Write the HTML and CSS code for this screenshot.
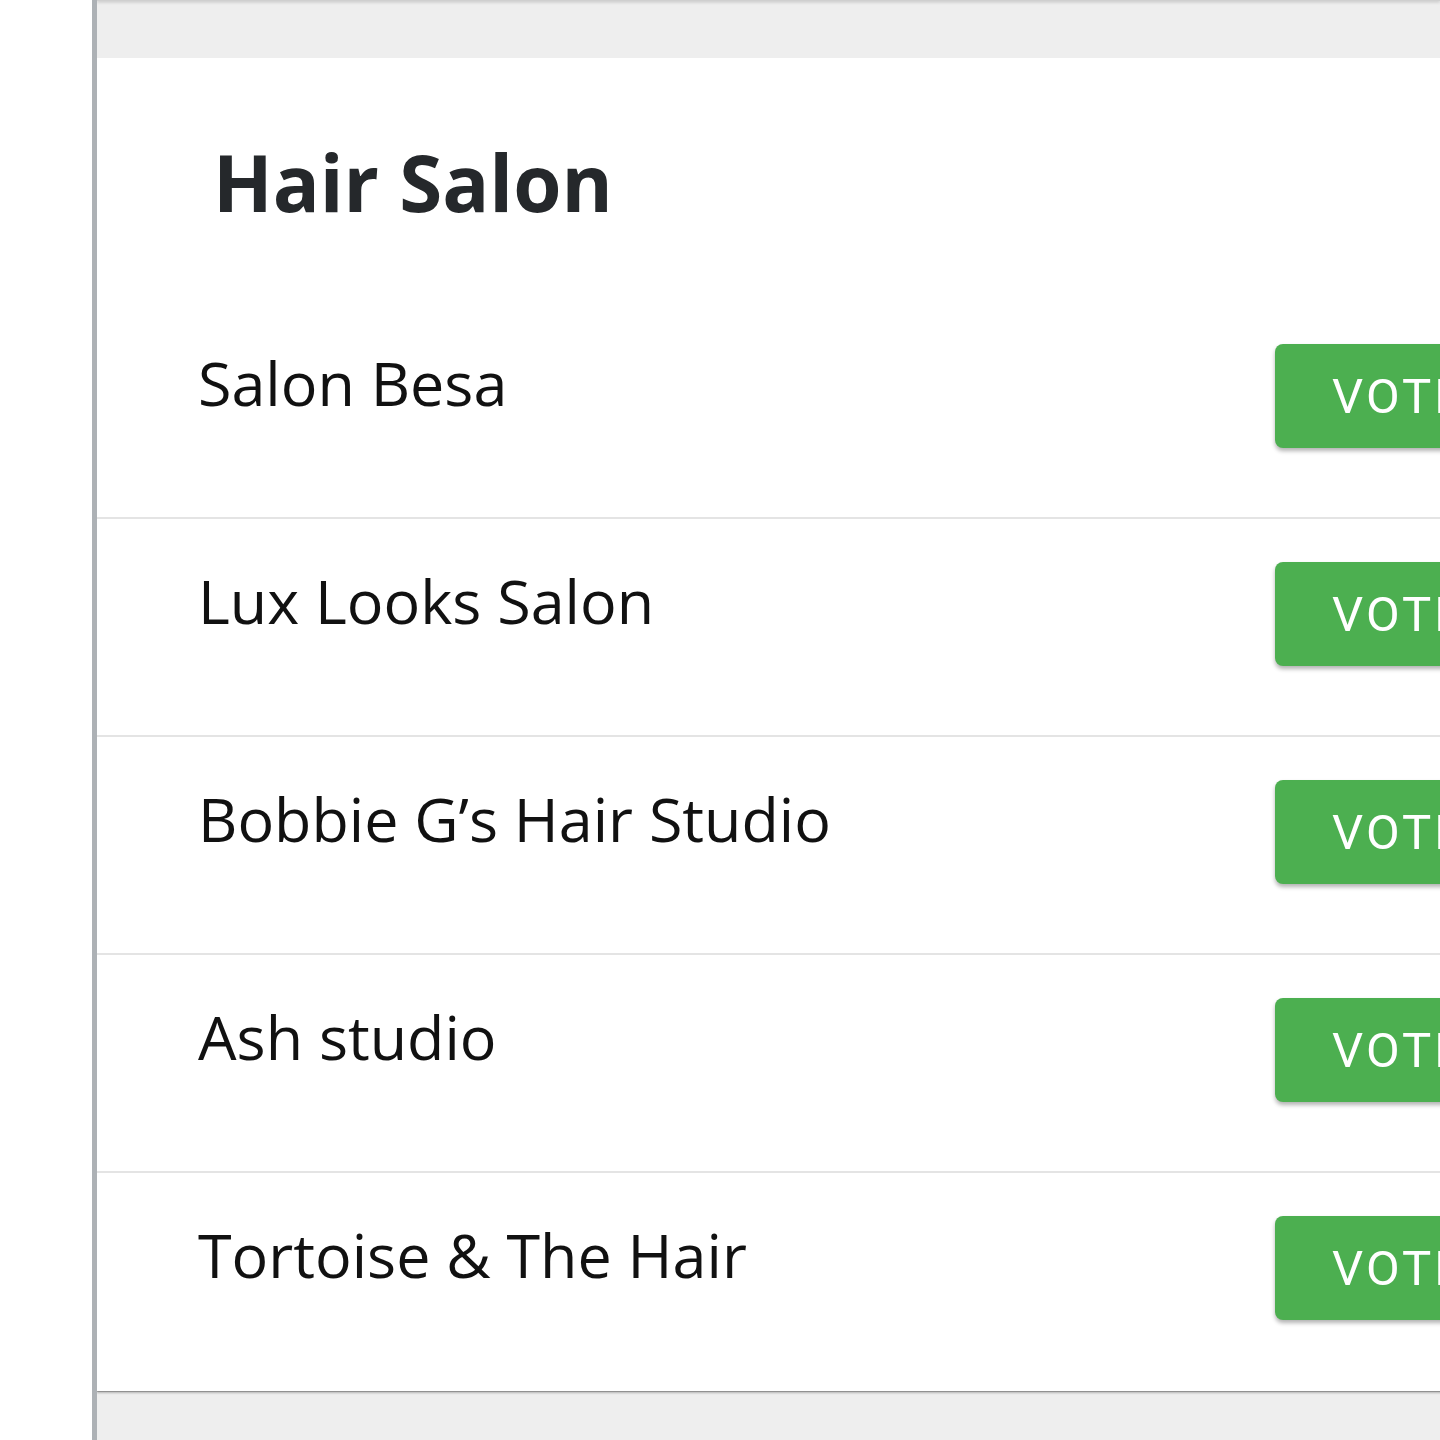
FILE: index.html
```html
<!DOCTYPE html>
<html lang="en">
<head>
<meta charset="utf-8">
<title>Hair Salon</title>
<link rel="stylesheet" href="styles.css">
</head>
<body>
<div class="page">
  <div class="gutter"></div>
  <main class="main">
    <div class="prev-card"></div>
    <section class="card">
      <header class="card-header">
        <h2 class="title">Hair Salon</h2>
      </header>
      <ul class="list">
        <li class="row"><span class="name">Salon Besa</span><button class="vote">VOTE</button></li>
        <li class="row"><span class="name">Lux Looks Salon</span><button class="vote">VOTE</button></li>
        <li class="row"><span class="name">Bobbie G’s Hair Studio</span><button class="vote">VOTE</button></li>
        <li class="row"><span class="name">Ash studio</span><button class="vote">VOTE</button></li>
        <li class="row"><span class="name">Tortoise &amp; The Hair</span><button class="vote">VOTE</button></li>
      </ul>
    </section>
  </main>
</div>
</body>
</html>
```

FILE: styles.css
```css
html, body {
  margin: 0;
  padding: 0;
  background: #ffffff;
}
body {
  font-family: "Open Sans", "Noto Sans", sans-serif;
}
.page {
  display: flex;
  height: 1440px;
  overflow: hidden;
}
.gutter {
  width: 92px;
  flex: none;
  background: #ffffff;
}
.main {
  flex: 1;
  background: #eeeeee;
  border-left: 5px solid #adb1b5;
  overflow: hidden;
}
.prev-card {
  height: 1px;
  background: #cfcfcf;
  box-shadow: 0 1px 3px rgba(0, 0, 0, 0.35);
  margin-bottom: 57px;
}
.card {
  width: 1557px;
  background: #ffffff;
  box-shadow: 0 2px 2px rgba(0, 0, 0, 0.25), 0 1px 0 #bdbdbd;
}
.card-header {
  height: 243px;
  box-sizing: border-box;
  padding: 71px 0 0 116px;
}
.title {
  margin: 0;
  font-family: "Open Sans", sans-serif;
  font-weight: 700;
  font-size: 78px;
  line-height: 106px;
  color: #25282b;
}
.list {
  list-style: none;
  margin: 0;
  padding: 0;
}
.row {
  height: 218px;
  box-sizing: border-box;
  display: flex;
  align-items: flex-start;
  justify-content: space-between;
  padding: 43px 0 0 101px;
  border-bottom: 2px solid #e4e4e4;
}
.row:last-child {
  border-bottom: none;
}
.name {
  font-family: "Open Sans", sans-serif;
  font-size: 61px;
  line-height: 84px;
  color: #111111;
  margin-top: -3px;
}
.vote {
  flex: none;
  width: 330px;
  height: 104px;
  margin-right: 49px;
  border: none;
  border-radius: 8px;
  background: #4caf50;
  color: #ffffff;
  font-family: Roboto, "Open Sans", sans-serif;
  font-weight: 400;
  font-size: 49px;
  letter-spacing: 3px;
  text-align: left;
  padding: 0 0 0 57px;
  box-shadow: 0 3px 4px rgba(0, 0, 0, 0.3);
}
```
